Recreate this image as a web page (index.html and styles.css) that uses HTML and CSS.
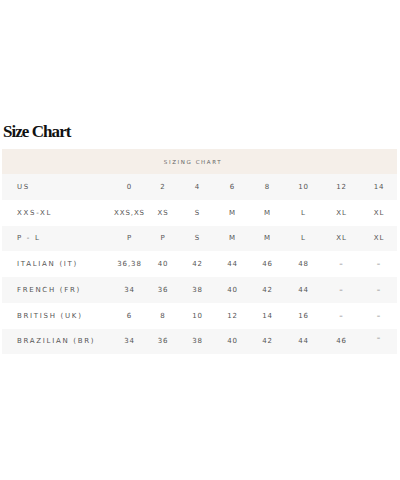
FILE: index.html
```html
<!DOCTYPE html>
<html>
<head>
<meta charset="utf-8">
<link rel="stylesheet" href="styles.css">
</head>
<body>
<main class="page">
  <h1 class="title">Size Chart</h1>
  <div class="chart">
    <div class="head">SIZING CHART</div>
    <div class="row alt"><span class="label">US</span><span>0</span><span>2</span><span>4</span><span>6</span><span>8</span><span>10</span><span>12</span><span>14</span></div>
    <div class="row"><span class="label">XXS-XL</span><span>XXS,XS</span><span>XS</span><span>S</span><span>M</span><span>M</span><span>L</span><span>XL</span><span>XL</span></div>
    <div class="row alt"><span class="label">P - L</span><span>P</span><span>P</span><span>S</span><span>M</span><span>M</span><span>L</span><span>XL</span><span>XL</span></div>
    <div class="row"><span class="label">ITALIAN (IT)</span><span>36,38</span><span>40</span><span>42</span><span>44</span><span>46</span><span>48</span><span>–</span><span>–</span></div>
    <div class="row alt"><span class="label">FRENCH (FR)</span><span>34</span><span>36</span><span>38</span><span>40</span><span>42</span><span>44</span><span>–</span><span>–</span></div>
    <div class="row"><span class="label">BRITISH (UK)</span><span>6</span><span>8</span><span>10</span><span>12</span><span>14</span><span>16</span><span>–</span><span>–</span></div>
    <div class="row alt"><span class="label">BRAZILIAN (BR)</span><span>34</span><span>36</span><span>38</span><span>40</span><span>42</span><span>44</span><span>46</span><span class="up">–</span></div>
  </div>
</main>
</body>
</html>
```

FILE: styles.css
```css
html, body {
  margin: 0;
  padding: 0;
  background: #ffffff;
}

.page {
  padding: 122px 3px 0 2px;
}

.title {
  margin: 0 0 8px 1px;
  font-family: "Liberation Serif", serif;
  font-weight: bold;
  font-size: 17px;
  line-height: 19px;
  letter-spacing: -0.95px;
  color: #111111;
}

.chart {
  width: 395px;
  font-family: "DejaVu Sans", sans-serif;
  color: #555555;
}

.head {
  height: 25px;
  background: #f5efe9;
  display: flex;
  align-items: center;
  justify-content: center;
  padding-right: 13px;
  font-size: 5.5px;
  letter-spacing: 1.6px;
  color: #666666;
}

.row {
  height: 25.75px;
  display: grid;
  grid-template-columns: 111px 33px 34px 35px 35px 35px 37px 39px 36px;
  align-items: center;
  font-size: 7px;
  letter-spacing: 0.9px;
}

.row.alt {
  background: #f7f7f7;
}

.row span {
  text-align: center;
}

.row .label {
  text-align: left;
  padding-left: 15px;
  font-size: 7px;
  letter-spacing: 1.7px;
}

.row .up {
  position: relative;
  top: -3px;
}
```
